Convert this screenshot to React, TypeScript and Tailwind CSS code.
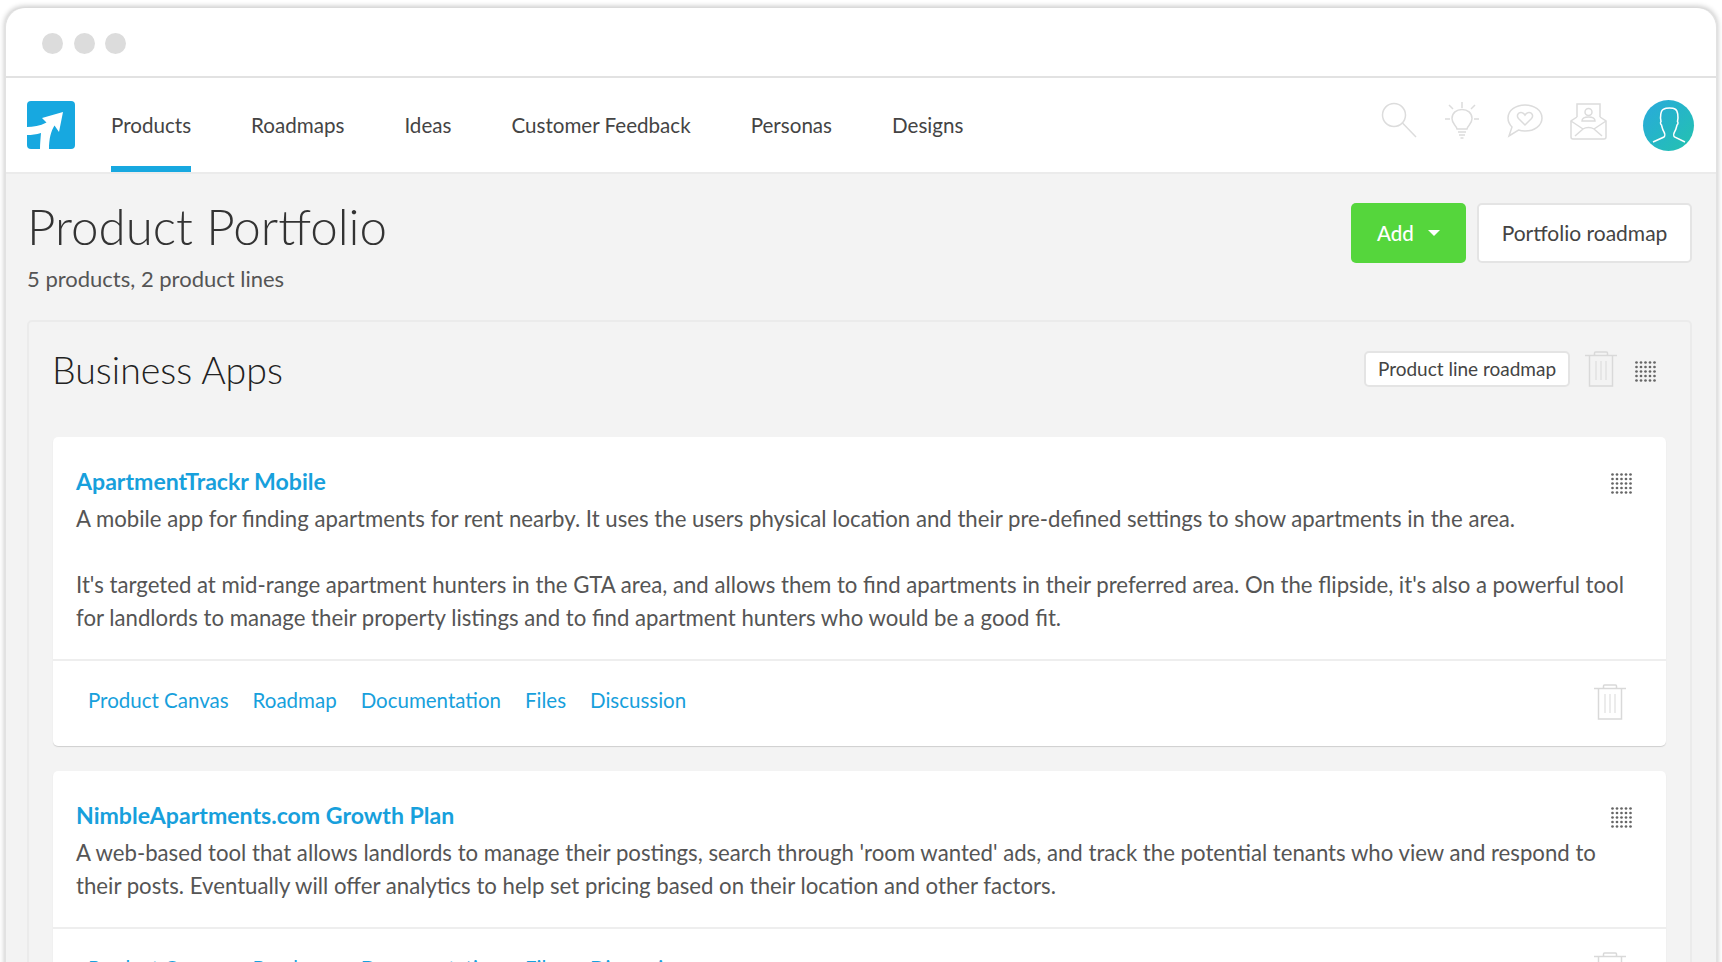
import React from "react";

const Logo = () => (
  <svg width="48" height="48" viewBox="0 0 48 48" className="shrink-0">
    <rect width="48" height="48" rx="4" fill="#17a8e0" />
    <path d="M36 11 L15 17 L19.5 21.5 C13 25 6 26 0 26 V34 C5 34 9 33.5 14 32 C13.5 38 13 43 13 48 H22 C22 38 24 30 27.5 24.5 L32 31 Z" fill="#fff" />
  </svg>
);

const SearchIcon = () => (
  <svg width="36" height="36" viewBox="0 0 36 36" fill="none" stroke="#dcdcdc" strokeWidth="1.5">
    <circle cx="13" cy="13" r="11.5" />
    <path d="M21.5 21 L35 35" />
  </svg>
);

const BulbIcon = () => (
  <svg width="36" height="38" viewBox="0 0 36 38" fill="none" stroke="#dcdcdc" strokeWidth="1.5">
    <path d="M18 0 V6 M5 3 L9 7 M31 3 L27 7 M1 17 H6 M30 17 H35" />
    <path d="M13 27 C12 23 8 22 8 16.5 C8 11 12.5 7.5 18 7.5 C23.5 7.5 28 11 28 16.5 C28 22 24 23 23 27 Z" />
    <path d="M14 30 H22 M15 33 H21 M16.5 36 H19.5" />
  </svg>
);

const ChatIcon = () => (
  <svg width="36" height="34" viewBox="0 0 36 34" fill="none" stroke="#dcdcdc" strokeWidth="1.5">
    <path d="M18 1 C27.5 1 35 6.5 35 14 C35 21.5 27.5 27 18 27 C15.5 27 13.5 26.7 11.5 26 L2 32 L5 23 C2.5 20.5 1 17.5 1 14 C1 6.5 8.5 1 18 1 Z" />
    <path d="M18 21 L11.5 14.5 C9 11.5 11.5 8 14.5 8.5 C16 8.7 17.3 9.8 18 11 C18.7 9.8 20 8.7 21.5 8.5 C24.5 8 27 11.5 24.5 14.5 Z" />
  </svg>
);

const MailIcon = () => (
  <svg width="37" height="37" viewBox="0 0 37 37" fill="none" stroke="#dcdcdc" strokeWidth="1.5">
    <path d="M7 14 V1 H30 V14" />
    <circle cx="18.5" cy="9" r="3.5" />
    <path d="M12 18 C12 15 15 14 18.5 14 C22 14 25 15 25 18 Z" />
    <path d="M7 14 L1 18 V34 C1 35.2 1.8 36 3 36 H34 C35.2 36 36 35.2 36 34 V18 L30 14" />
    <path d="M1 18 L13 26 M36 18 L24 26 M5 33 L13 26 C16 24 21 24 24 26 L32 33" />
  </svg>
);

const Avatar = () => (
  <div className="flex h-[51px] w-[51px] items-center justify-center rounded-full bg-gradient-to-br from-[#2aa9dc] to-[#25c2ae]">
    <svg width="34" height="36" viewBox="0 0 34 36" fill="none" stroke="#fff" strokeWidth="1.5">
      <path d="M1 35 L12 30 C13 29 13 26.5 12 25 C10.5 23 10 20 9.5 18 C8 17 8.5 15 9 14.5 C8 10 8.5 3 12 2 C14 0.8 21 0.8 23 2 C26 3.5 26.5 10 25.5 14.5 C26 15 26.5 17 25 18 C24.5 20 24 23 22.5 25 C21.5 26.5 21.5 29 22.5 30 L33 35" />
    </svg>
  </div>
);

const Trash = () => (
  <svg width="32" height="36" viewBox="0 0 32 36" fill="none" stroke="#d9d9d9" strokeWidth="1.5" className="shrink-0">
    <path d="M0 4.5 H32 M9.5 4.5 V2 C9.5 1.3 10 1 10.5 1 H21.5 C22 1 22.5 1.3 22.5 2 V4.5" />
    <path d="M4.5 4.5 V35 H27.5 V4.5" />
    <path d="M11 10 V29 M16 10 V29 M21 10 V29" strokeWidth="1" />
  </svg>
);

const Grip = () => (
  <svg width="21" height="21" viewBox="0 0 21 21" fill="#666" className="shrink-0">
    {[1.5, 6, 10.5, 15, 19.5].map((y) =>
      [1.5, 6, 10.5, 15, 19.5].map((x) => <circle key={`${x}-${y}`} cx={x} cy={y} r="1.35" />)
    )}
  </svg>
);

const navItems = ["Products", "Roadmaps", "Ideas", "Customer Feedback", "Personas", "Designs"];
const cardLinks = ["Product Canvas", "Roadmap", "Documentation", "Files", "Discussion"];

function Card({ title, children }: { title: string; children: React.ReactNode }) {
  return (
    <div className="mb-[25px] rounded-[5px] bg-white shadow-[0_1px_1px_#cfcfcf]">
      <div className="relative px-[23px] pt-[28px] pb-[25px]">
        <div className="absolute right-[34px] top-[36px]">
          <Grip />
        </div>
        <a className="block h-[33px] text-[23.1px] leading-[33px] font-bold text-[#17a0dc]">{title}</a>
        <div className="mt-[4px] text-[22.2px] leading-[33px] text-[#555]">{children}</div>
      </div>
      <div className="flex h-[87px] items-center justify-between border-t-2 border-[#eeeeee] pr-[40px] pb-[4px] pl-[35px]">
        <div className="flex gap-[24px] pb-[2px] text-[20.5px] text-[#17a0dc]">
          {cardLinks.map((l) => (
            <a key={l}>{l}</a>
          ))}
        </div>
        <Trash />
      </div>
    </div>
  );
}

export default function App() {
  return (
    <div className="h-[962px] overflow-hidden bg-white pt-[8px] pr-[4px] pl-[4px] font-['Lato',sans-serif]">
      <div className="h-[1000px] rounded-t-[20px] border-x-2 border-[#e2e2e2] bg-[#f3f3f3] shadow-[0_-2px_5px_#cccccc]">
        {/* window title bar */}
        <div className="flex h-[70px] items-center gap-[10.5px] rounded-t-[20px] border-b-2 border-[#e2e2e2] bg-white pt-[2px] pl-[36px]">
          <span className="h-[21px] w-[21px] rounded-full bg-[#dcdcdc]" />
          <span className="h-[21px] w-[21px] rounded-full bg-[#dcdcdc]" />
          <span className="h-[21px] w-[21px] rounded-full bg-[#dcdcdc]" />
        </div>

        <header className="flex h-[96px] items-center border-b-2 border-[#ebebeb] bg-white pr-[22px] pl-[21px]">
          <Logo />
          <nav className="ml-[36px] flex h-full gap-[60px] text-[20.6px] text-[#444]">
            {navItems.map((item, i) => (
              <a
                key={item}
                className={`flex items-center border-b-[6px] pt-[7px] ${i === 0 ? "border-[#17a8e0]" : "border-transparent"}`}
              >
                {item}
              </a>
            ))}
          </nav>
          <div className="ml-auto flex items-center gap-[27px]">
            <div className="-mt-[10px]">
              <SearchIcon />
            </div>
            <div className="-mt-[8px]">
              <BulbIcon />
            </div>
            <div className="-mt-[8px]">
              <ChatIcon />
            </div>
            <div className="-mt-[8px]">
              <MailIcon />
            </div>
            <div className="ml-[9px]">
              <Avatar />
            </div>
          </div>
        </header>

        <div className="pr-[24px] pl-[21px]">
          <div className="flex items-start justify-between pt-[29px]">
            <div className="-mt-[5px]">
              <h1 className="text-[49.3px] leading-[56px] font-light text-[#333]">Product Portfolio</h1>
              <p className="mt-[10px] text-[22px] leading-[30px] text-[#555]">5 products, 2 product lines</p>
            </div>
            <div className="flex gap-[11px]">
              <button className="flex h-[60px] w-[115px] items-center justify-center gap-[14px] rounded-[5px] bg-[#55d63c] text-[20.5px] font-medium text-white">
                Add
                <span className="h-0 w-0 border-x-[6px] border-t-[6px] border-x-transparent border-t-white" />
              </button>
              <button className="h-[60px] w-[215px] rounded-[5px] border-2 border-[#e4e4e4] bg-white text-[21px] text-[#444]">
                Portfolio roadmap
              </button>
            </div>
          </div>

          <section className="mt-[26px] rounded-[5px] border-2 border-[#ebebeb] px-[24px] pt-[26px]">
            <div className="mb-[45px] flex items-center justify-between pr-[10px]">
              <h2 className="-ml-[1px] text-[37.5px] leading-[44px] font-light text-[#222]">Business Apps</h2>
              <div className="-mt-[2px] flex items-center">
                <button className="h-[36px] w-[206px] rounded-[5px] border-2 border-[#e4e4e4] bg-white pb-[2px] text-[19px] leading-none text-[#444]">
                  Product line roadmap
                </button>
                <div className="mr-[18px] ml-[15px]">
                  <Trash />
                </div>
                <div className="mt-[4px]">
                  <Grip />
                </div>
              </div>
            </div>
            <Card title="ApartmentTrackr Mobile">
              <p>A mobile app for finding apartments for rent nearby. It uses the users physical location and their pre-defined settings to show apartments in the area.</p>
              <p className="mt-[33px]">It's targeted at mid-range apartment hunters in the GTA area, and allows them to find apartments in their preferred area. On the flipside, it's also a powerful tool for landlords to manage their property listings and to find apartment hunters who would be a good fit.</p>
            </Card>
            <Card title="NimbleApartments.com Growth Plan">
              <p>A web-based tool that allows landlords to manage their postings, search through 'room wanted' ads, and track the potential tenants who view and respond to their posts. Eventually will offer analytics to help set pricing based on their location and other factors.</p>
            </Card>
          </section>
        </div>
      </div>
    </div>
  );
}
